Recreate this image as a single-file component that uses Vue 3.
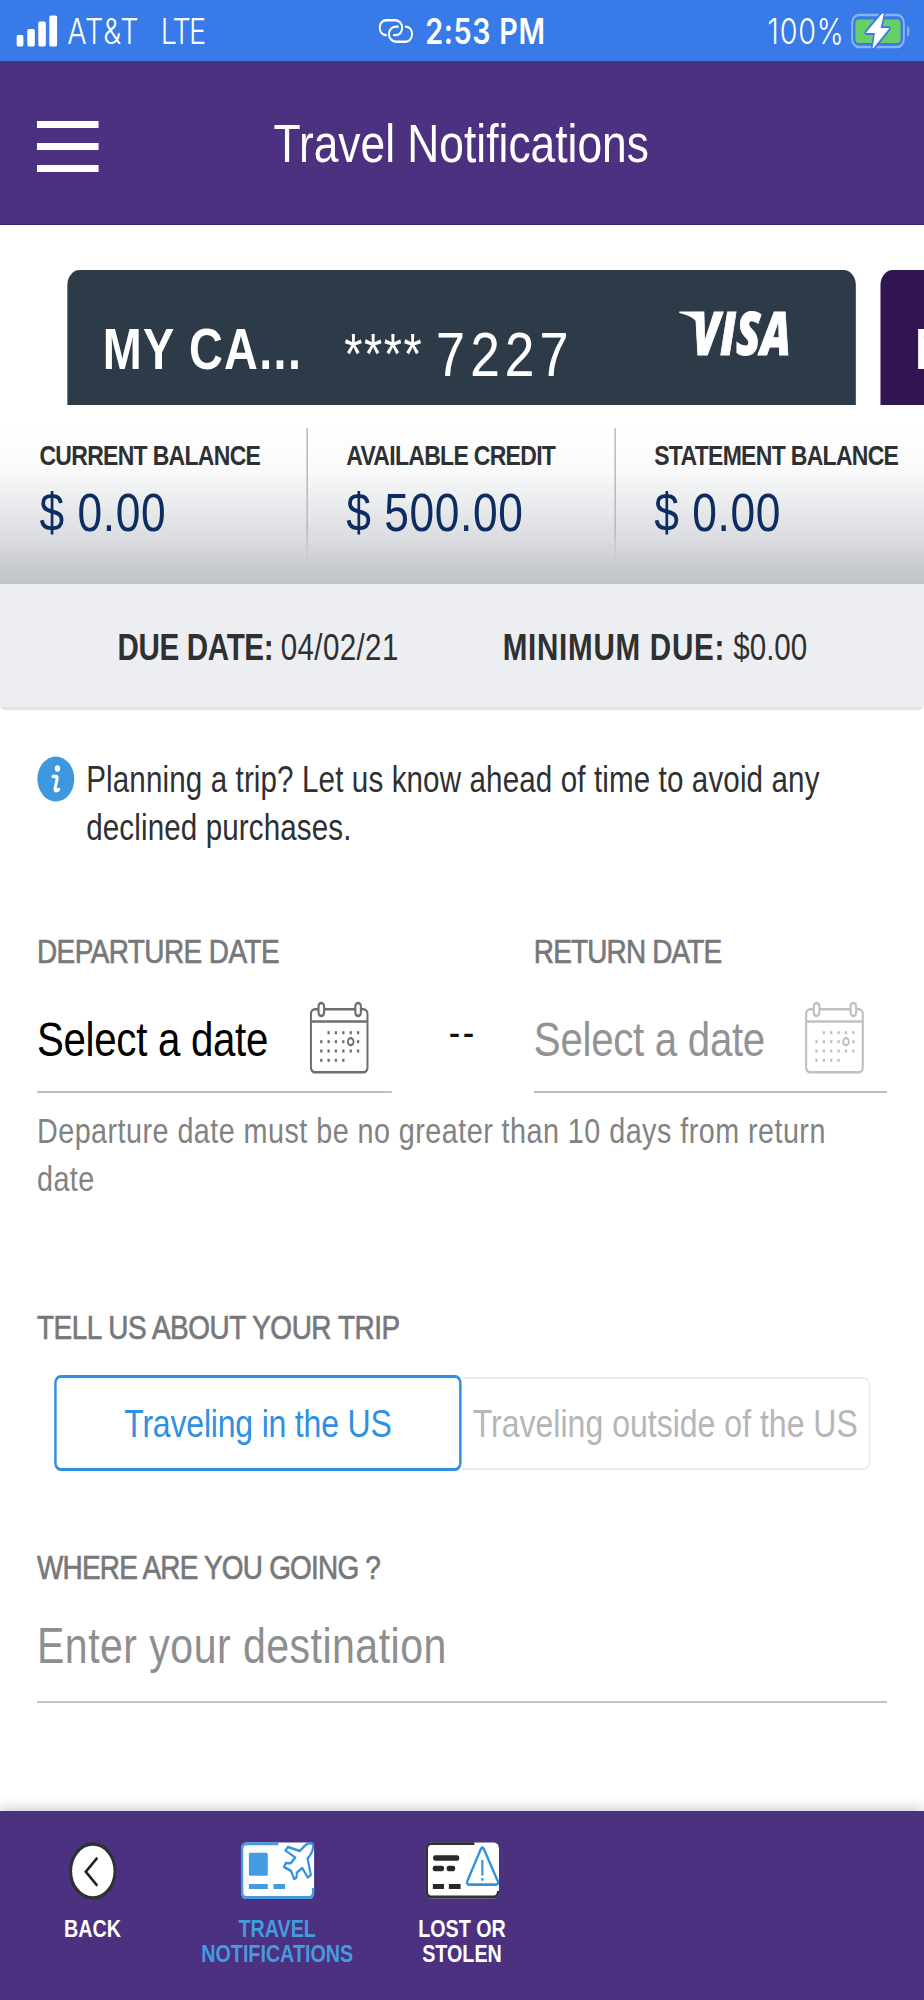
<script setup>
const balances = [
  { label: 'CURRENT BALANCE', value: '$ 0.00' },
  { label: 'AVAILABLE CREDIT', value: '$ 500.00' },
  { label: 'STATEMENT BALANCE', value: '$ 0.00' },
]

const dates = [
  { label: 'DEPARTURE DATE', kind: 'depart' },
  { label: 'RETURN DATE', kind: 'return' },
]

const columns = [14.2, 23.1, 32, 41, 50, 59]
const days = []
;[31.7, 40.7, 50, 59.3].forEach((y, row) => {
  columns.forEach((x, col) => {
    if (row === 0 && col === 0) return
    if (row === 3 && col > 3) return
    if (row === 1 && col === 4) return
    days.push({ x, y })
  })
})
</script>

<template>
  <div class="viewport">
    <div class="screen">
      <div class="status">
        <div class="status-left">
          <svg class="signal" width="50" height="32" viewBox="0 0 50 32">
            <rect x="0" y="20" width="8.5" height="11.5" rx="2" />
            <rect x="13.2" y="14" width="9.2" height="17.5" rx="2" />
            <rect x="26.6" y="6.5" width="9.2" height="25" rx="2" />
            <rect x="40" y="0.5" width="9.6" height="31" rx="2" />
          </svg>
          <span class="carrier">AT&amp;T</span>
          <span class="network">LTE</span>
        </div>
        <div class="status-mid">
          <svg width="42" height="24" viewBox="0 0 42 24" fill="none" stroke="#fff" stroke-width="2.4" stroke-linecap="round">
            <path d="M9 16.2C4 15.8 1.3 12.6 1.3 8.8C1.3 4.4 4.6 1.3 9 1.3H20.5C25.6 1.3 28.6 4.8 28.6 8.8C28.6 13 25.6 16.1 20.8 16.1H18.5" />
            <path d="M33 7.6C37.8 8 40.7 11.2 40.7 15C40.7 19.4 37.4 22.7 33 22.7H21.5C16 22.7 12.6 19.2 12.6 15.2C12.6 11 15.8 7.6 20.8 7.6H23.5" />
          </svg>
          <span class="clock">2:53 PM</span>
        </div>
        <div class="status-right">
          <span class="percent">100%</span>
          <svg class="battery" width="72" height="36" viewBox="0 0 72 36">
            <rect x="1.5" y="2" width="63" height="32" rx="8" fill="none" stroke="#8ab2f3" stroke-width="2.4" />
            <path d="M68.5 12.5Q71.5 14 71.5 18T68.5 24Z" fill="#8ab2f3" />
            <rect x="5.5" y="6.5" width="55" height="23.5" rx="4" fill="#67cf66" />
            <path d="M38 1L19 19.5H30L27 35L46 15.5H35.5L39.5 1Z" fill="#fff" stroke="#377ae8" stroke-width="5" stroke-linejoin="round" />
            <path d="M38 1L19 19.5H30L27 35L46 15.5H35.5L39.5 1Z" fill="#fff" stroke="#fff" stroke-width="1" stroke-linejoin="round" />
          </svg>
        </div>
      </div>

      <header class="header">
        <div class="menu"><i></i><i></i><i></i></div>
        <h1 class="title">Travel Notifications</h1>
      </header>

      <section class="cards">
        <div class="card">
          <span class="card-name">MY CA...</span>
          <span class="stars">****</span>
          <span class="digits">7227</span>
          <svg class="visa" width="140" height="60" viewBox="0 0 140 60" fill="#fff">
            <path d="M0 2.5H17C22 2.5 24.500 4.500 25 8L30 27C26 13 16 6.500 0 4Z" />
            <text x="16" y="45.5" textLength="120" lengthAdjust="spacingAndGlyphs">VISA</text>
          </svg>
        </div>
        <div class="card next"><span class="card-name">M</span></div>
      </section>

      <section class="balances">
        <div v-for="b in balances" :key="b.label" class="balance">
          <div class="balance-label">{{ b.label }}</div>
          <div class="balance-value">{{ b.value }}</div>
        </div>
      </section>

      <section class="due">
        <span class="due-date"><b>DUE DATE:</b> <span>04/02/21</span></span>
        <span class="due-min"><b>MINIMUM DUE:</b> <span>$0.00</span></span>
      </section>

      <main class="content">
        <div class="info">
          <svg width="46" height="46" viewBox="0 0 46 46">
            <circle cx="23" cy="23" r="22.5" fill="#3f97df" />
            <circle cx="25" cy="12.5" r="3.2" fill="#fff" />
            <path d="M19.500 20.500H23.500Q25 20.500 24.500 23L22 32.500Q21.500 35 24 34.500L26.500 33.500" fill="none" stroke="#fff" stroke-width="3.6" stroke-linecap="round" />
          </svg>
          <p>Planning a trip? Let us know ahead of time to avoid any<br />declined purchases.</p>
        </div>

        <div class="dates">
          <template v-for="(d, i) in dates" :key="d.kind">
            <div v-if="i" class="dash">--</div>
            <div class="date" :class="d.kind">
              <div class="label">{{ d.label }}</div>
              <div class="date-field">
                <span class="date-text">Select a date</span>
                <svg class="calendar" width="72" height="73" viewBox="0 0 72 73" fill="none" stroke="currentColor" stroke-width="2.6">
                  <rect x="1.5" y="8.300" width="69" height="63" rx="5" />
                  <path d="M2 20.500H70" />
                  <rect class="ring" x="10.8" y="2" width="6.800" height="13" rx="3.400" />
                  <rect class="ring" x="55.600" y="2" width="6.800" height="13" rx="3.400" />
                  <rect v-for="(p, k) in days" :key="k" :x="p.x - 1.4" :y="p.y - 1.5" width="2.8" height="3" fill="currentColor" stroke="none" />
                  <circle cx="50" cy="40.700" r="3.500" stroke-width="2.200" />
                </svg>
              </div>
            </div>
          </template>
        </div>
        <p class="hint">Departure date must be no greater than 10 days from return<br />date</p>

        <div class="label trip">TELL US ABOUT YOUR TRIP</div>
        <div class="toggle">
          <button class="option selected">Traveling in the US</button>
          <button class="option outside">Traveling outside of the US</button>
        </div>

        <div class="label where">WHERE ARE YOU GOING ?</div>
        <div class="destination">Enter your destination</div>
      </main>

      <nav class="tabs">
        <div class="tab">
          <svg width="58" height="58" viewBox="0 0 58 58">
            <circle cx="29" cy="29" r="27" fill="#fff" stroke="#2c3134" stroke-width="3.6" />
            <path d="M34.500 15.700L20.500 29.700L34.500 43.700" fill="none" stroke="#1f2325" stroke-width="3" />
          </svg>
          <span class="tab-back">BACK</span>
        </div>
        <div class="tab active">
          <svg width="90" height="58" viewBox="0 0 90 58">
            <rect x="0.500" y="0.500" width="89" height="56.500" rx="6" fill="#fff" />
            <path d="M46 1.700H7Q1.700 1.700 1.700 7V50Q1.700 55.500 7 55.500H83Q88.300 55.500 88.300 50V46" fill="none" stroke="#459bdf" stroke-width="3" />
            <rect x="10" y="10.700" width="23" height="23" rx="1.500" fill="#459bdf" />
            <path d="M10 44.500H33M40 44.500H54" stroke="#459bdf" stroke-width="5" />
            <path d="M88 2Q83 0 78.400 3.500L72 9L57.500 5L54.500 8.500L66.500 15.500L61 21.300L55 21L52.800 25L61.500 29L65 37L68 35.500L68.500 30.500L75 26L81.700 35.500L85.500 33L81.500 16.500Q89.500 9 88 2Z" fill="#fff" stroke="#3393e0" stroke-width="2.600" stroke-linejoin="round" />
          </svg>
          <span class="tab-travel">TRAVEL<br /><em>NOTIFICATIONS</em></span>
        </div>
        <div class="tab">
          <svg width="90" height="58" viewBox="0 0 90 58">
            <rect x="0.500" y="0.500" width="89" height="56" rx="6" fill="#fff" />
            <path d="M59.500 1.700H7Q1.700 1.700 1.700 7V49.500Q1.700 55 7 55H83Q88.500 55 88.500 49" fill="none" stroke="#2c3134" stroke-width="2.800" />
            <path d="M12 16H38.500M11.500 26.500H20M28.500 26.500H33.500" stroke="#25292b" stroke-width="5.400" stroke-linecap="round" />
            <path d="M9 44.500H22.600M28.500 44.500H42.800" stroke="#25292b" stroke-width="5" />
            <path d="M67.200 7.500Q69.300 4 71.400 7.500L88 39Q89.300 42.500 86 42.700H53Q49.800 42.500 51 39Z" fill="#fff" stroke="#3393e0" stroke-width="2.800" />
            <path d="M69.300 18V33.500M69.300 36V38.700" stroke="#3393e0" stroke-width="2.600" />
          </svg>
          <span class="tab-lost">LOST OR<br />STOLEN</span>
        </div>
      </nav>
    </div>
  </div>
</template>

<style>
body { background: #fff; }
</style>

<style scoped>
* { box-sizing: border-box; }
p, h1 { margin: 0; font-weight: 400; }
.viewport { width: 924px; height: 2000px; overflow: hidden; }
/* Artboard is 375pt wide at 3x, condensed horizontally to the viewport width. */
.screen {
  width: 1125px; height: 2000px; transform: scaleX(0.82133); transform-origin: 0 0;
  display: flex; flex-direction: column; overflow: hidden;
  font-family: "Liberation Sans", Arial, sans-serif; color: #2e3032; background: #fff;
}
.screen span, .label, .title, p { white-space: nowrap; }

.status {
  height: 60.5px; flex: none; background: #377ae8; color: #fff;
  font: 35px/60px Inter, sans-serif; display: grid; grid-template-columns: 1fr auto 1fr; align-items: center;
}
.status-left, .status-mid, .status-right { display: flex; align-items: center; }
.status span { padding-top: 1px; }
.status-left { padding-left: 20px; }
.signal { fill: #fff; margin-right: 12px; }
.carrier { margin-right: 26px; font-weight: 300; letter-spacing: 1px; }
.network { font-weight: 300; letter-spacing: -2.200px; }
.status-mid { gap: 15px; }
.clock { font-weight: 600; letter-spacing: 0.800px; }
.status-right { justify-content: flex-end; padding-right: 17px; gap: 8px; font-weight: 300; }
.percent { letter-spacing: 0.900px; }

.header { height: 164.5px; flex: none; background: #4b317f; border-bottom: 1px solid #3b1f76; display: grid; grid-template-columns: 120px 1fr 120px; align-items: center; }
.menu { padding-left: 45px; display: flex; flex-direction: column; gap: 15px; padding-top: 8px; }
.menu i { display: block; width: 75px; height: 7px; background: #fff; }
.title { color: #fff; font-size: 54px; line-height: 60px; text-align: center; padding: 1px 2px 0 0; }

.cards { padding: 45px 0 0 82px; display: flex; gap: 30px; flex: none; }
.card { width: 960px; height: 134.5px; flex: none; background: #2d3a48; border-radius: 15px 15px 0 0; color: #fff; display: flex; align-items: flex-start; padding: 0 0 0 43px; }
.card > * { flex: none; }
.next { background: #311550; padding-left: 42px; }
.card-name { font-size: 57px; font-weight: 700; line-height: 60px; margin-top: 49px; width: 293px; letter-spacing: 1.600px; }
.next .card-name { width: auto; }
.stars { font-size: 57px; line-height: 60px; margin-top: 54px; width: 111px; letter-spacing: 1.900px; padding-left: 1px; }
.digits { font: 65px/60px "Liberation Mono", monospace; margin-top: 59px; letter-spacing: 3px; width: 180px; }
.visa { margin: 39px 0 0 118px; overflow: visible; }
.visa text { font: italic 800 60px "Open Sans", sans-serif; stroke: #fff; stroke-width: 1px; }

.balances { height: 179.5px; flex: none; padding-top: 23.5px; display: grid; grid-template-columns: repeat(3, 375px); background: linear-gradient(#fff 12%, #f9f9fa 37%, #eeeff1 50%, #dcdde0 74%, #c9cccf 90%, #c1c4c7); }
.balance { height: 137px; padding: 10px 0 0 48px; position: relative; }
.balance + .balance { padding-left: 46.500px; }
.balance + .balance::before { content: ""; position: absolute; left: -2px; top: 0; width: 2px; height: 137px; background: linear-gradient(#bfc1c3, #b9bbbd 75%, transparent); }
.balance-label { font-size: 28px; font-weight: 700; line-height: 36px; letter-spacing: -0.850px; white-space: nowrap; }
.balance-value { margin-top: 8px; font-size: 54px; line-height: 60px; letter-spacing: 0.700px; color: #0c2c62; }

.due { height: 125.5px; flex: none; background: #edeef1; border-bottom: 3px solid #e3e5e6; border-radius: 0 0 6px 6px; font-size: 36px; line-height: 128px; display: flex; padding-left: 143px; }
.due-date { width: 469px; }
.due-date b { letter-spacing: -0.400px; }
.due-date > span { letter-spacing: 0.450px; margin-left: -1px; }
.due-min b { letter-spacing: 0.900px; }

.content { padding: 46px 45px 0; flex: 1; }
.info { display: flex; gap: 14px; align-items: flex-start; }
.info p { font-size: 36px; line-height: 48px; letter-spacing: 0.150px; }
.dates { margin-top: 79.500px; display: flex; }
.label { color: #77787a; font-size: 34px; line-height: 40px; -webkit-text-stroke: 0.700px #77787a; }
.depart .label { letter-spacing: -0.670px; }
.return .label { letter-spacing: -1px; }
.date { width: 432px; }
.return { width: 430px; }
.date-field { margin-top: 20px; height: 102px; border-bottom: 2px solid #bebebe; display: flex; align-items: flex-start; position: relative; }
.date-text { font-size: 49px; line-height: 60px; margin-top: 18px; width: 332px; letter-spacing: -0.360px; color: #000; }
.calendar { margin-top: 10px; color: #6d6e70; }
.ring { fill: #fff; }
.return .date-text { color: #939393; width: 330px; }
.return .calendar { color: #c0c0c0; }
.dash { width: 173px; font-size: 42px; line-height: 40px; padding-top: 82px; text-align: center; letter-spacing: 3px; color: #111; }
.hint { margin-top: 13.500px; font-size: 35px; line-height: 48px; letter-spacing: 0.560px; padding-top: 0.500px; color: #828282; }
.trip { margin-top: 104px; letter-spacing: -0.540px; }
.toggle { margin: 28px 0 0 21px; display: flex; align-items: center; }
.option { font: 39px/60px "Liberation Sans", Arial, sans-serif; padding: 2px 0 0; background: none; border: 2px solid #ececec; height: 93px; width: 498px; color: #b5b6b7; white-space: nowrap; border-radius: 0 9px 9px 0; border-left: 0; }
.selected { width: 496px; height: 96px; border: 3px solid #2f8fe0; border-radius: 8px; color: #2f8fe0; letter-spacing: -0.250px; }
.where { margin-top: 76px; letter-spacing: -0.950px; }
.destination { margin-top: 28px; height: 88px; padding-top: 1px; border-bottom: 2px solid #c2c2c2; font-size: 50px; line-height: 60px; letter-spacing: 0.570px; color: #8e8e8e; }

.tabs { height: 189px; flex: none; background: #4b317f; box-shadow: 0 -2px 14px rgba(0, 0, 0, 0.22); display: grid; grid-template-columns: repeat(5, 225px); padding-top: 31px; color: #fff; }
.tab { display: flex; flex-direction: column; align-items: center; text-align: center; font-size: 24px; font-weight: 700; line-height: 24.500px; }
.tab span { margin-top: 17px; }
.tab em { font-style: normal; }
.active { color: #459bdf; }
</style>
